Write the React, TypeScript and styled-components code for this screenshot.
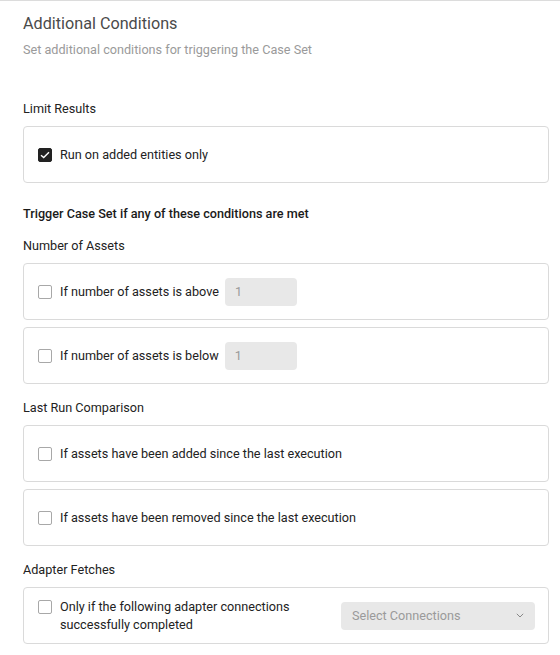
import React from "react";
import styled, { createGlobalStyle } from "styled-components";

const Global = createGlobalStyle`
  html, body { margin: 0; padding: 0; background: #fff; }
  body { font-family: Roboto, "Liberation Sans", Arial, sans-serif; }
  * { box-sizing: border-box; }
`;

const Page = styled.div`
  border-top: 1px solid #dcdcdc;
  padding: 13px 11px 12px 23px;
  display: flex;
  flex-direction: column;
`;

const Title = styled.h1`
  margin: 0;
  font-size: 16.2px;
  line-height: 20px;
  font-weight: 400;
  color: #4a4a4a;
`;

const Subtitle = styled.p`
  margin: 7px 0 0;
  font-size: 12.65px;
  line-height: 18px;
  color: #9a9a9a;
`;

const SectionLabel = styled.div<{ $top: number }>`
  margin-top: ${(p) => p.$top}px;
  font-size: 12.65px;
  line-height: 18px;
  color: #222;
`;

const Heading = styled.div`
  margin-top: 22px;
  font-size: 12.65px;
  line-height: 18px;
  font-weight: 500;
  color: #1a1a1a;
`;

const CardList = styled.div`
  margin-top: 8px;
  display: flex;
  flex-direction: column;
  gap: 7px;
`;

const Card = styled.div`
  min-height: 57px;
  border: 1px solid #dadada;
  border-radius: 4px;
  padding: 0 13px 0 14px;
  display: flex;
  align-items: center;
  gap: 6px;
`;

const CheckRow = styled.label<{ $grow?: boolean }>`
  display: flex;
  align-items: flex-start;
  gap: 8px;
  flex: ${(p) => (p.$grow ? "1" : "none")};
  font-size: 12.65px;
  line-height: 18px;
  color: #222;
`;

const Box = styled.span<{ $checked?: boolean }>`
  flex: none;
  width: 14px;
  height: 14px;
  margin-top: 2px;
  border-radius: 2px;
  border: 1px solid ${(p) => (p.$checked ? "#222" : "#a8a8a8")};
  background: ${(p) => (p.$checked ? "#222" : "#fff")};
  display: flex;
  align-items: center;
  justify-content: center;
`;

const LabelText = styled.span<{ $width?: number }>`
  ${(p) => (p.$width ? `width: ${p.$width}px;` : "")}
`;

const NumberInput = styled.div`
  width: 72px;
  height: 28px;
  border-radius: 4px;
  background: #e8e8e8;
  padding-left: 10px;
  display: flex;
  align-items: center;
  font-size: 12.65px;
  color: #9a9a9a;
`;

const Select = styled.div`
  width: 194px;
  height: 28px;
  border-radius: 4px;
  background: #e8e8e8;
  padding: 0 11px 0 11px;
  display: flex;
  align-items: center;
  justify-content: space-between;
  font-size: 12.65px;
  color: #9a9a9a;
`;

const Checkbox = ({ checked }: { checked?: boolean }) => (
  <Box $checked={checked}>
    {checked && (
      <svg width="10" height="8" viewBox="0 0 10 8">
        <path d="M1 4.2 L3.7 6.6 L9 1.2" fill="none" stroke="#fff" strokeWidth="1.4" />
      </svg>
    )}
  </Box>
);

const Chevron = () => (
  <svg width="8" height="5" viewBox="0 0 8 5">
    <path d="M0.8 0.8 L4 4 L7.2 0.8" fill="none" stroke="#888" strokeWidth="1" />
  </svg>
);

export default function App() {
  return (
    <>
      <Global />
      <Page>
        <Title>Additional Conditions</Title>
        <Subtitle>Set additional conditions for triggering the Case Set</Subtitle>

        <SectionLabel $top={41}>Limit Results</SectionLabel>
        <CardList>
          <Card>
            <CheckRow>
              <Checkbox checked />
              <span>Run on added entities only</span>
            </CheckRow>
          </Card>
        </CardList>

        <Heading>Trigger Case Set if any of these conditions are met</Heading>

        <SectionLabel $top={14}>Number of Assets</SectionLabel>
        <CardList>
          <Card>
            <CheckRow>
              <Checkbox />
              <span>If number of assets is above</span>
            </CheckRow>
            <NumberInput>1</NumberInput>
          </Card>
          <Card>
            <CheckRow>
              <Checkbox />
              <span>If number of assets is below</span>
            </CheckRow>
            <NumberInput>1</NumberInput>
          </Card>
        </CardList>

        <SectionLabel $top={15}>Last Run Comparison</SectionLabel>
        <CardList>
          <Card>
            <CheckRow>
              <Checkbox />
              <span>If assets have been added since the last execution</span>
            </CheckRow>
          </Card>
          <Card>
            <CheckRow>
              <Checkbox />
              <span>If assets have been removed since the last execution</span>
            </CheckRow>
          </Card>
        </CardList>

        <SectionLabel $top={15}>Adapter Fetches</SectionLabel>
        <CardList>
          <Card>
            <CheckRow $grow>
              <Checkbox />
              <LabelText $width={250}>
                Only if the following adapter connections successfully completed
              </LabelText>
            </CheckRow>
            <Select>
              <span>Select Connections</span>
              <Chevron />
            </Select>
          </Card>
        </CardList>
      </Page>
    </>
  );
}
